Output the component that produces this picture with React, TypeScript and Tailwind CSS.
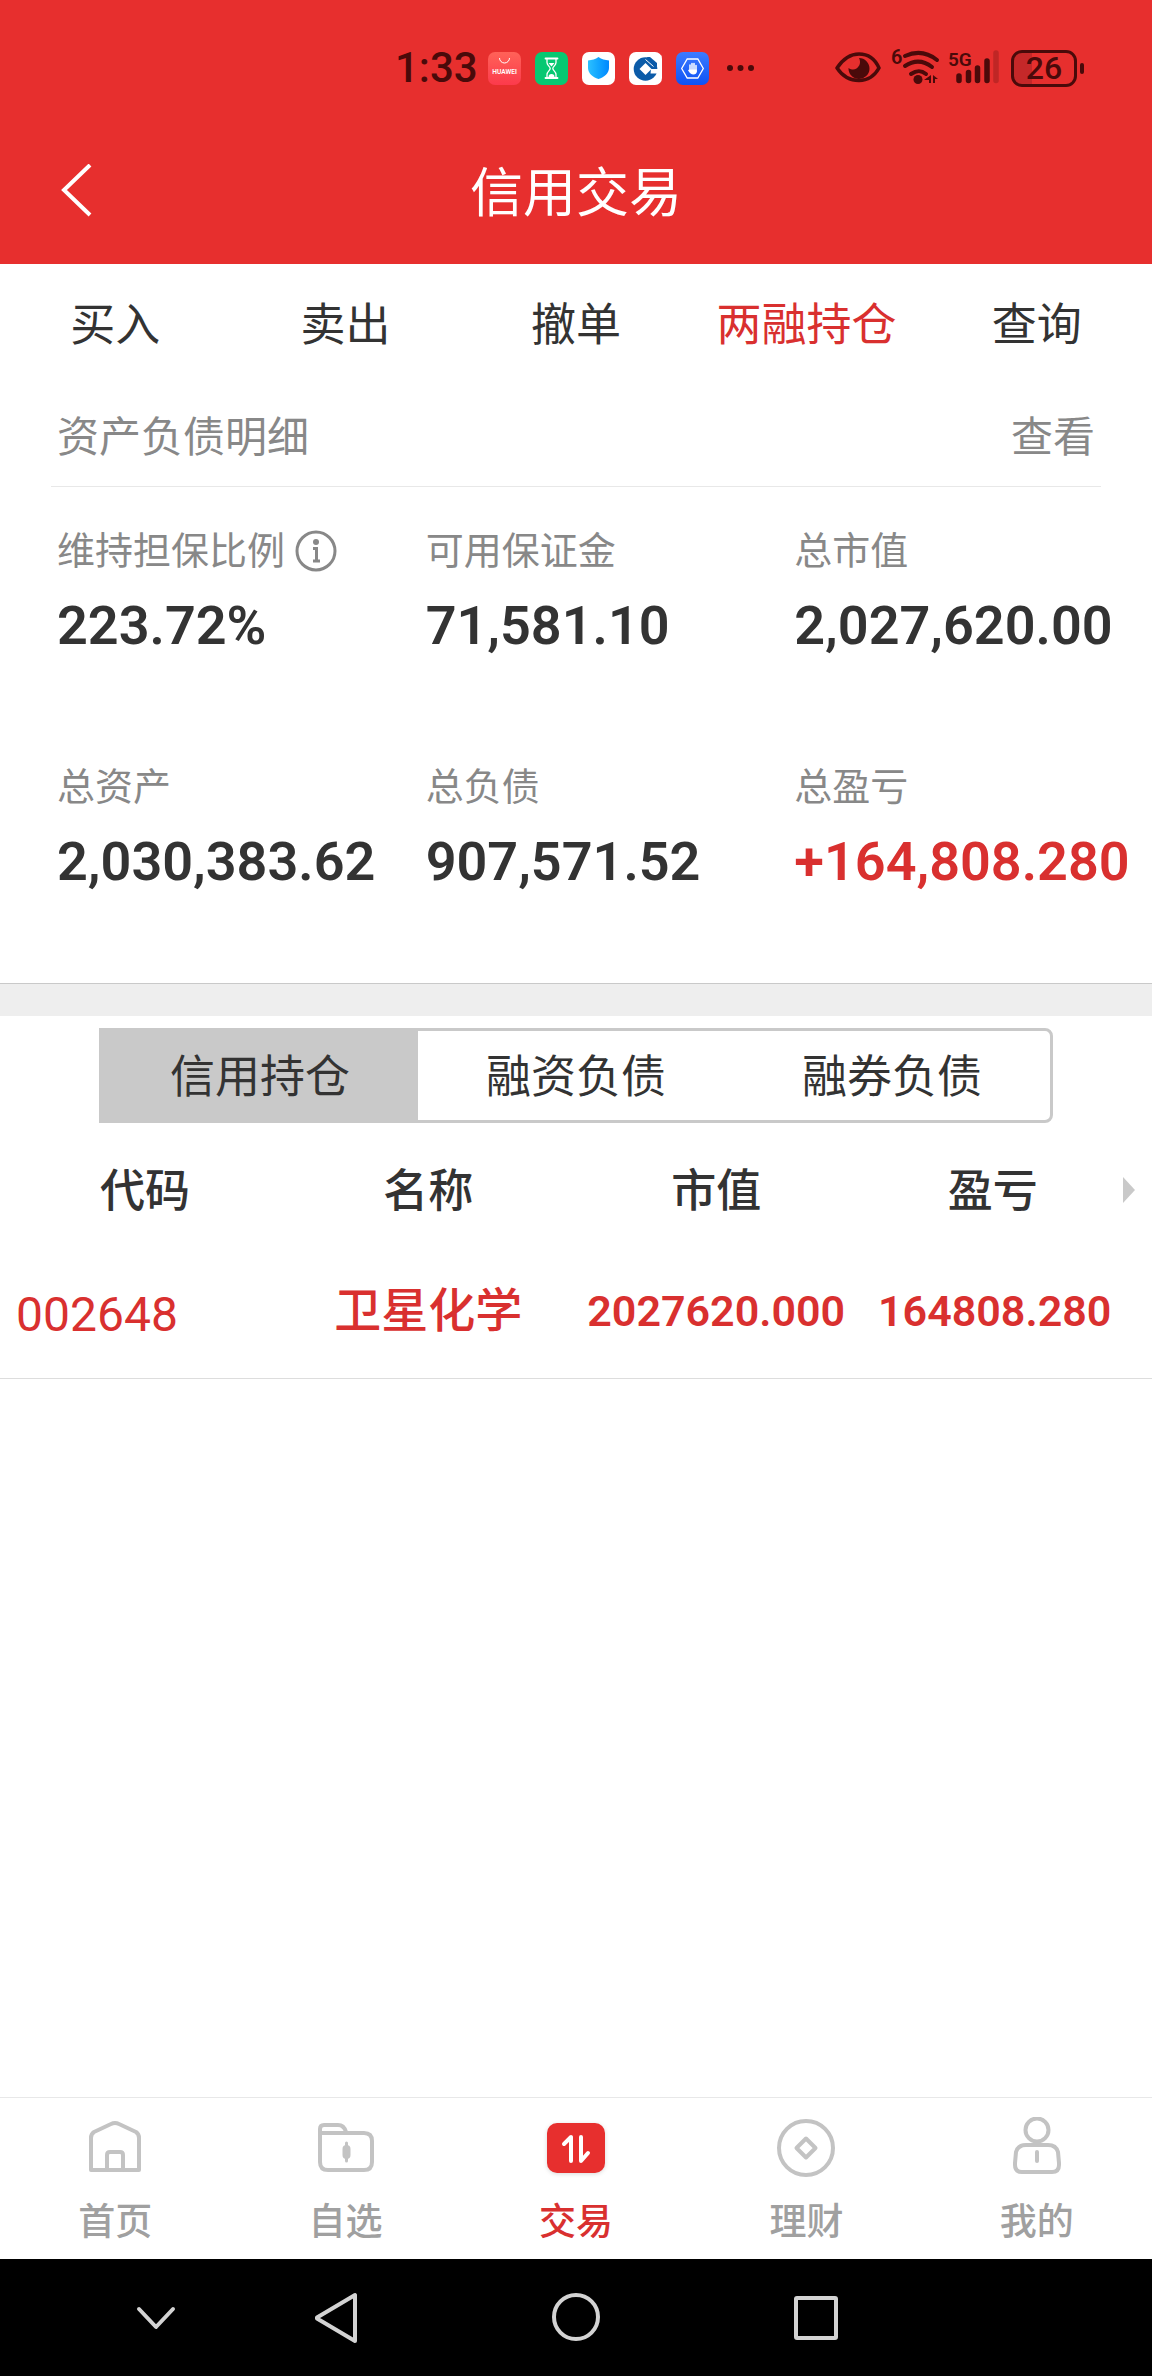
import { useState } from "react";
import type { ReactNode } from "react";

const tabs = ["买入", "卖出", "撤单", "两融持仓", "查询"];
const segments = ["信用持仓", "融资负债", "融券负债"];

const stats = [
  { label: "维持担保比例", value: "223.72%", info: true },
  { label: "可用保证金", value: "71,581.10" },
  { label: "总市值", value: "2,027,620.00" },
  { label: "总资产", value: "2,030,383.62" },
  { label: "总负债", value: "907,571.52" },
  { label: "总盈亏", value: "+164,808.280", up: true },
];

const holdings = [{ code: "002648", name: "卫星化学", marketValue: "2027620.000", profit: "164808.280" }];

function AppBadge({ children }: { children: ReactNode }) {
  return (
    <svg viewBox="0 0 33 33" className="size-[33px]" aria-hidden="true">
      {children}
    </svg>
  );
}

function StatusBar() {
  return (
    <div className="flex h-[120px] items-center justify-between pt-4 pr-[68px] pl-[395px] text-[#4a0a0a]">
      <div className="flex items-center gap-[14px]">
        <span className="w-[79px] text-[42px] leading-none font-medium">1:33</span>
        <AppBadge>
          <defs>
            <linearGradient id="store" x1="0" y1="0" x2="0" y2="1">
              <stop offset="0" stopColor="#ff6258" />
              <stop offset="1" stopColor="#fc3a4c" />
            </linearGradient>
          </defs>
          <rect width="33" height="33" rx="7" fill="url(#store)" />
          <path d="M11.5 6a5 5 0 0 0 10 0" fill="none" stroke="#fff" strokeWidth="1" />
          <text x="16.5" y="21.5" textAnchor="middle" fontSize="6.6" fontWeight="600" fill="#fff">
            HUAWEI
          </text>
        </AppBadge>
        <AppBadge>
          <rect width="33" height="33" rx="7" fill="#07c872" />
          <g fill="none" stroke="#fff" strokeWidth="1.3" strokeLinejoin="round">
            <path d="M10.5 6.5h12M10.5 26h12" strokeWidth="1.8" strokeLinecap="round" />
            <path d="M12 7v3.5c0 3 3.2 4 3.2 6s-3.2 3-3.2 6V26M21 7v3.5c0 3-3.2 4-3.2 6s3.2 3 3.2 6V26" />
          </g>
          <path d="M13.5 11h6l-3 3.5zM13.5 25c0-2 1-3 3-3s3 1 3 3z" fill="#fff" />
        </AppBadge>
        <AppBadge>
          <defs>
            <linearGradient id="shield" x1="0" y1="0" x2="1" y2="0">
              <stop offset="0" stopColor="#2cc0ff" />
              <stop offset="0.5" stopColor="#12a5ff" />
              <stop offset="1" stopColor="#0088ff" />
            </linearGradient>
          </defs>
          <rect width="33" height="33" rx="7" fill="#fff" />
          <path
            d="M16.5 5c3 2.3 6.5 3 10.5 3.5V16c0 5-4.500 9-10.500 11C10.500 25 6 21 6 16V8.500c4-.5 7.500-1.200 10.500-3.500z"
            fill="url(#shield)"
          />
        </AppBadge>
        <AppBadge>
          <rect width="33" height="33" rx="7" fill="#fff" />
          <circle cx="16.5" cy="17" r="11.8" fill="#0b5ba8" />
          <path d="m16.5 11 6 6-6 6-6-6z" fill="#fff" />
          <path d="M22 17h7v4.5h-7.500z" fill="#fff" />
          <path d="m17.5 3.5 12 10.500h3V3.500z" fill="#fff" />
          <path d="M17.5 5h3.500l7 6v3.500z" fill="#0b5ba8" />
          <path d="m16.5 7.5 8 7" stroke="#fff" strokeWidth="1" />
        </AppBadge>
        <AppBadge>
          <defs>
            <linearGradient id="guard" x1="0" y1="0" x2="0" y2="1">
              <stop offset="0" stopColor="#3d7bff" />
              <stop offset="1" stopColor="#0d52f5" />
            </linearGradient>
          </defs>
          <rect width="33" height="33" rx="7" fill="url(#guard)" />
          <path d="M11.2 7h10.600l5.500 9.500-5.500 9.500H11.200l-5.500-9.500z" fill="none" stroke="#fff" strokeWidth="1.3" />
          <path
            d="M14 13v6M16 11.5v7M18 11.5v7M20 13.5v6"
            stroke="#fff"
            strokeWidth="1.5"
            strokeLinecap="round"
          />
          <path d="M13.2 17.5h7.600v2c0 2-1.500 3-3.300 3-2.300 0-3.700-1.200-5.500-4.200z" fill="#fff" />
        </AppBadge>
        <svg viewBox="0 0 34 33" className="h-[33px] w-[34px]" fill="currentColor" aria-hidden="true">
          <circle cx="7" cy="16" r="3" />
          <circle cx="17.5" cy="16" r="3" />
          <circle cx="28" cy="16" r="3" />
        </svg>
      </div>

      <div className="flex items-center">
        <svg viewBox="0 -10 168 60" className="h-[60px] w-[168px]" fill="none" stroke="currentColor" aria-hidden="true">
          {/* eye comfort */}
          <path d="M2 20C8 11 15 6 24 6s16 5 20 14c-5 9-11 12.5-20 12.5S8 29 2 20z" strokeWidth="3.5" strokeLinejoin="round" />
          <path
            d="M24 10a10.5 10.5 0 1 1-10.500 10c3 2 6 2 8 .5 3.500-2.500 4.500-6.500 2.500-10.500z"
            fill="currentColor"
            stroke="none"
          />
          {/* wifi */}
          <text x="56" y="16" fontSize="20" fontWeight="600" fill="currentColor" stroke="none">
            6
          </text>
          <path d="M70 8c11-5 22-4 32 4M70 18c9-6 18-6 27 1M76 26c6-4 10-4 15 0" strokeWidth="4" strokeLinecap="round" />
          <circle cx="83" cy="31.5" r="4.5" fill="currentColor" stroke="none" />
          <path d="M96 27v8h-2v-3h-5zM98 27l5 4h-3v4h-2z" fill="currentColor" stroke="none" />
          {/* cellular */}
          <text x="113" y="18" fontSize="19" fontWeight="600" fill="currentColor" stroke="none">
            5G
          </text>
          <path d="M124 28v4.5M133.5 24.500v8M142.500 20v12.500M152 13v19.500" strokeWidth="5.5" strokeLinecap="round" />
          <path d="M161 5v27.5" strokeWidth="5.5" strokeLinecap="round" opacity="0.25" />
        </svg>
        <div className="ml-2 flex h-[37px] w-[66px] items-center justify-center rounded-[11px] border-[3px] border-current bg-linear-to-r from-[#c52829] from-30% to-transparent to-30% text-[32px] leading-none font-medium">
          26
        </div>
        <span className="ml-[3px] h-[11px] w-1 rounded-full bg-current" />
      </div>
    </div>
  );
}

function HomeIcon() {
  return (
    <>
      <path d="M6 53V21q0-4 3-6L26 7q4-2 8 0l17 8q3 2 3 6v32z" />
      <path d="M22 53V38q0-3 3-3h10q3 0 3 3v15" />
    </>
  );
}

function FolderIcon() {
  return (
    <>
      <path d="M4 16v29q0 8 8 8h36q8 0 8-8V24q0-8-8-8zV12q0-4 4-4h14q6 0 8 7" />
      <path d="M30.5 26v18" strokeWidth="3" />
      <path d="M30.5 32v6" strokeWidth="8" />
    </>
  );
}

function TradeIcon() {
  return (
    <>
      <rect x="1" y="6" width="58" height="50" rx="10" fill="#e72f2e" stroke="none" />
      <path d="m18 27 7-7v24M35 20v24l7-8" stroke="#fff" />
    </>
  );
}

function WealthIcon() {
  return (
    <>
      <circle cx="30" cy="31" r="27" />
      <path d="m30 21.5 9.500 9.500-9.500 9.500-9.500-9.500z" />
    </>
  );
}

function ProfileIcon() {
  return (
    <>
      <circle cx="30" cy="13" r="11.5" />
      <path d="M19 28h22q8 0 10 7l1 11v2q0 7-7 7H15q-7 0-7-7v-2l1-11q2-7 10-7z" />
      <path d="M30 35v9" />
    </>
  );
}

const navItems = [
  { label: "首页", icon: <HomeIcon /> },
  { label: "自选", icon: <FolderIcon /> },
  { label: "交易", icon: <TradeIcon />, active: true },
  { label: "理财", icon: <WealthIcon /> },
  { label: "我的", icon: <ProfileIcon /> },
];

const systemKeys = [
  { label: "收起", icon: <path d="m13 21 17 18 17-18" /> },
  { label: "返回", icon: <path d="M11 29.5 49 7v46L11 30.5z" /> },
  { label: "主屏幕", icon: <circle cx="30" cy="29" r="22" /> },
  { label: "最近任务", icon: <rect x="10" y="10" width="40" height="40" rx="1" /> },
];

export default function App() {
  const [tab, setTab] = useState("两融持仓");
  const [segment, setSegment] = useState("信用持仓");

  return (
    <div className="flex min-h-screen flex-col bg-white font-['Roboto','Noto_Sans_CJK_SC',sans-serif] text-[#333]">
      <header className="bg-[#e72f2e]">
        <StatusBar />
        <div className="grid h-[144px] grid-cols-[120px_1fr_120px] items-center text-white">
          <button type="button" aria-label="返回" className="flex h-full items-center pl-[59px]">
            <svg viewBox="0 0 36 56" className="h-14 w-9" fill="none" stroke="currentColor" strokeWidth="4">
              <path d="M31 1 5 26l26 25" />
            </svg>
          </button>
          <h1 className="pt-1 text-center text-[53px] leading-none">信用交易</h1>
        </div>
      </header>

      <nav className="grid h-[120px] grid-cols-5">
        {tabs.map((name) => (
          <button
            key={name}
            type="button"
            onClick={() => setTab(name)}
            className={`pt-1 text-[45px] whitespace-nowrap ${name === tab ? "text-[#d9302f]" : ""}`}
          >
            {name}
          </button>
        ))}
      </nav>

      <section>
        <div className="mx-[51px] flex h-[103px] items-center justify-between border-b border-[#e8e8e8] px-[6px] pt-1 text-[42px] text-[#888]">
          <h2>资产负债明细</h2>
          <a href="#detail">查看</a>
        </div>
        <dl className="grid grid-cols-[32%_32%_1fr] gap-y-[98px] pt-9 pb-[86px]">
          {stats.map((s) => (
            <div key={s.label} className="flex flex-col gap-3 pl-[57px]">
              <dt className="flex items-center gap-[10px] text-[38px] leading-[56px] whitespace-nowrap text-[#888]">
                {s.label}
                {s.info && (
                  <svg viewBox="0 0 42 42" className="size-[42px]" fill="none" stroke="currentColor" aria-hidden="true">
                    <circle cx="21" cy="21" r="19" strokeWidth="3" />
                    <circle cx="21" cy="12" r="3" fill="currentColor" stroke="none" />
                    <path d="M18 18.5h3.500V31M18 31h7" strokeWidth="3" />
                  </svg>
                )}
              </dt>
              <dd className={`text-[54px] leading-[70px] font-semibold ${s.up ? "text-[#d9302f]" : ""}`}>{s.value}</dd>
            </div>
          ))}
        </dl>
      </section>

      <div className="h-[33px] border-t border-[#c9c9c9] bg-[#eee]" />

      <div className="mx-[99px] mt-3 grid h-[95px] grid-cols-3 overflow-hidden rounded-r-lg border-[3px] border-[#c9c9c9]">
        {segments.map((name) => (
          <button
            key={name}
            type="button"
            onClick={() => setSegment(name)}
            className={`pt-1 text-[45px] leading-none ${name === segment ? "bg-[#c9c9c9]" : ""}`}
          >
            {name}
          </button>
        ))}
      </div>

      <table className="mt-2 w-full table-fixed">
        <thead>
          <tr className="h-[118px] text-[45px]">
            <th className="w-[24.5%] pt-1 pl-2 font-medium">代码</th>
            <th className="w-[25%] pt-1 pl-1 font-medium">名称</th>
            <th className="w-[25%] pt-1 pl-1 font-medium">市值</th>
            <th className="w-[23%] pt-1 pl-1 font-medium">盈亏</th>
            <th className="w-[2.5%]" aria-label="更多">
              <svg viewBox="0 0 12 26" className="h-[26px] w-3" fill="#c9c9c9" aria-hidden="true">
                <path d="M0 0 12 13 0 26z" />
              </svg>
            </th>
          </tr>
        </thead>
        <tbody>
          {holdings.map((h) => (
            <tr key={h.code} className="h-[129px] border-b border-[#ddd] text-center text-[#d9302f]">
              <td className="pt-1 pl-4 text-left text-[48px]">{h.code}</td>
              <td className="pb-1 pl-1 text-[47px] font-medium">{h.name}</td>
              <td className="pb-1 pl-1 text-[43px] font-semibold">{h.marketValue}</td>
              <td className="pb-1 pl-2 text-[43px] font-semibold">{h.profit}</td>
              <td />
            </tr>
          ))}
        </tbody>
      </table>

      <footer className="mt-auto">
        <nav className="grid h-[162px] grid-cols-5 border-t border-[#e8e8e8]">
          {navItems.map((item) => (
            <a
              key={item.label}
              href="#"
              className={`flex flex-col items-center gap-5 pt-[19px] text-[37px] leading-[52px] font-medium ${
                item.active ? "text-[#d9302f]" : "text-[#a0a0a0]"
              }`}
            >
              <svg
                viewBox="0 0 60 60"
                className={`size-[60px] ${item.active ? "drop-shadow-sm" : ""}`}
                fill="none"
                stroke="#c3c3c3"
                strokeWidth="4"
                strokeLinecap="round"
                strokeLinejoin="round"
                aria-hidden="true"
              >
                {item.icon}
              </svg>
              {item.label}
            </a>
          ))}
        </nav>
        <div className="grid h-[117px] grid-cols-[3fr_3fr_5fr_3fr] bg-black pr-[246px] pl-[66px]">
          {systemKeys.map((key) => (
            <button key={key.label} type="button" aria-label={key.label} className="flex items-center justify-center">
              <svg
                viewBox="0 0 60 60"
                className="size-[60px]"
                fill="none"
                stroke="#d3d3d3"
                strokeWidth="4"
                strokeLinecap="round"
                strokeLinejoin="round"
              >
                {key.icon}
              </svg>
            </button>
          ))}
        </div>
      </footer>
    </div>
  );
}
